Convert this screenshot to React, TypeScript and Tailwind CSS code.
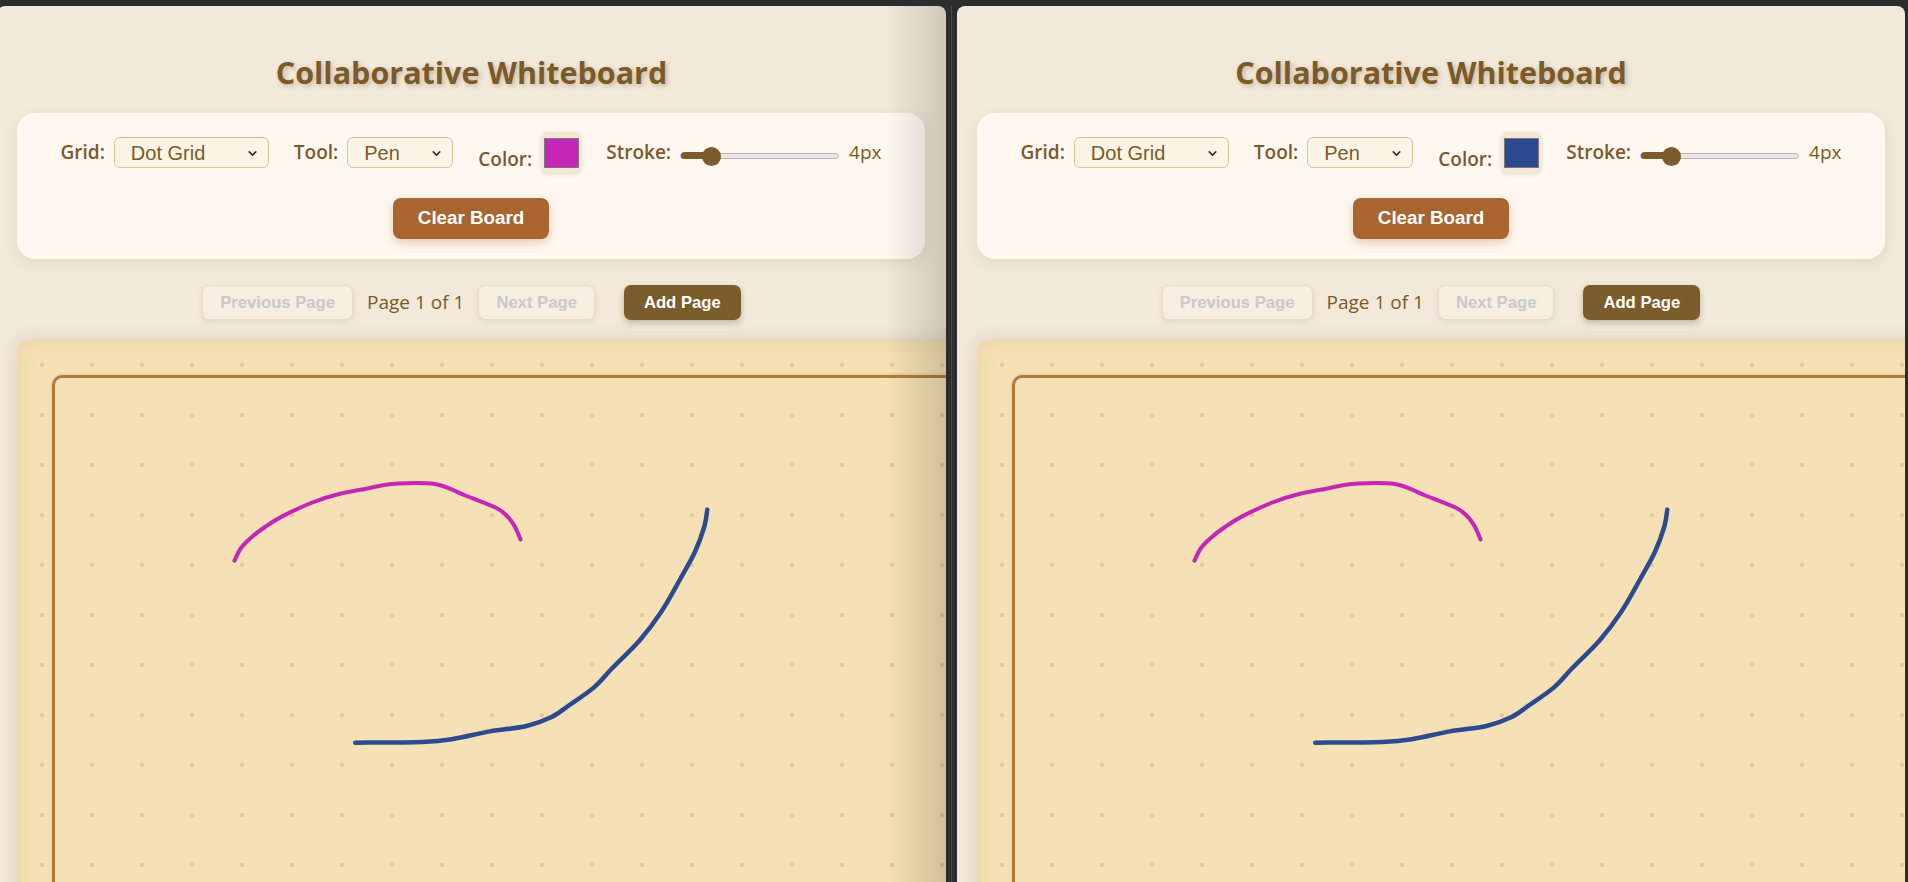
import React from 'react';
import { ChevronDown } from 'lucide-react';

const magenta: [number, number][] = [
  [217.5, 220.6], [224, 208], [234, 197.7], [248, 187], [264.7, 176.6], [295.3, 162.5], [322, 154],
  [350.4, 148.5], [375, 143.9], [417.8, 143.9], [448.4, 155.5], [479, 167.8], [490, 176],
  [496, 183.7], [500, 191], [503.5, 199.5],
];

const blue: [number, number][] = [
  [690.3, 169.6], [687.2, 187], [678, 211.8], [662.7, 240], [644.3, 271.7], [623, 299.9],
  [595.4, 328], [577, 347.4], [552.5, 365], [534, 377.3], [509.6, 386], [472.9, 391.4],
  [436, 399], [405.5, 401.9], [338.2, 402.7],
];

// smooth the captured points with a catmull-rom curve
const toPath = (p: [number, number][]) => {
  let d = `M${p[0][0]},${p[0][1]}`;
  for (let i = 0; i < p.length - 1; i++) {
    const p0 = p[i - 1] || p[i];
    const p1 = p[i];
    const p2 = p[i + 1];
    const p3 = p[i + 2] || p2;
    const c1x = p1[0] + (p2[0] - p0[0]) / 6;
    const c1y = p1[1] + (p2[1] - p0[1]) / 6;
    const c2x = p2[0] - (p3[0] - p1[0]) / 6;
    const c2y = p2[1] - (p3[1] - p1[1]) / 6;
    d += ` C${c1x},${c1y} ${c2x},${c2y} ${p2[0]},${p2[1]}`;
  }
  return d;
};

function Select({ value, width }: { value: string; width: string }) {
  return (
    <div
      className={`relative flex items-center h-[31px] ${width} rounded-[6px] border border-[#dcc291] bg-[#fcf5e7] pl-[16px] text-[20px] text-[#7a5a2b] font-['Liberation_Sans',Arial,sans-serif]`}
    >
      {value}
      <ChevronDown className="absolute right-[9px] top-[9px] h-[13px] w-[13px] text-[#333]" strokeWidth={3} />
    </div>
  );
}

function Whiteboard({ swatch, dim }: { swatch: string; dim?: boolean }) {
  return (
    <div className="relative h-[876px] overflow-hidden rounded-t-[8px] bg-[#f2e9da]">
      <div className="flex flex-col items-center px-[20px] pt-[46px]">
        <h1 className="h-[40px] leading-[40px] text-[30.5px] font-bold text-[#7a5a2b] [text-shadow:2px_2px_5px_rgba(122,90,43,0.35)]">
          Collaborative Whiteboard
        </h1>

        {/* Toolbar */}
        <div className="mt-[21px] w-[908px] self-start rounded-[18px] bg-[#fef8f0] px-[20px] pt-[19px] pb-[20px] shadow-[0_4px_14px_rgba(122,90,43,0.12)]">
          <div className="flex h-[41px] items-center justify-center gap-x-[25px] text-[19px] text-[#7a5a2b]">
            <div className="flex items-center gap-[9px]">
              <span className="font-semibold">Grid:</span>
              <Select value="Dot Grid" width="w-[155px]" />
            </div>
            <div className="flex items-center gap-[9px]">
              <span className="font-semibold">Tool:</span>
              <Select value="Pen" width="w-[106px]" />
            </div>
            <div className="flex h-[41px] items-end gap-[9px]">
              <span className="font-semibold leading-[28px]">Color:</span>
              <div className="flex h-[41px] w-[40px] items-center justify-center rounded-[6px] bg-[#f3e7d4] shadow-[0_1px_4px_rgba(122,90,43,0.2)]">
                <div className={`h-[30px] w-[35px] border border-[#7a7a7a] ${swatch}`} />
              </div>
            </div>
            <div className="flex items-center gap-[9px]">
              <span className="font-semibold">Stroke:</span>
              <div className="relative mt-[6px] flex h-[6px] w-[159px] items-center rounded-full border border-[#b9b9b9] bg-[#e8e8e8]">
                <div className="h-[7px] w-[31px] rounded-full bg-[#7b5c2c]" />
                <div className="absolute left-[21px] top-[-7px] h-[19px] w-[19px] rounded-full bg-[#7b5c2c]" />
              </div>
              <span className="ml-[1px]">4px</span>
            </div>
          </div>
          <div className="mt-[25px] flex justify-center">
            <button className="h-[41px] rounded-[8px] bg-[#a9652f] px-[25px] text-[18.75px] font-bold text-white font-['Liberation_Sans',Arial,sans-serif] shadow-[0_4px_10px_rgba(169,101,47,0.3)]">
              Clear Board
            </button>
          </div>
        </div>

        {/* Pagination */}
        <div className="mt-[26px] flex items-center font-['Liberation_Sans',Arial,sans-serif]">
          <button className="h-[35px] rounded-[7px] border border-[#edd9c2] bg-[#f7eee2] px-[17px] text-[16.67px] font-bold text-[#c9c9c9] shadow-[0_2px_5px_rgba(169,101,47,0.15)]">
            Previous Page
          </button>
          <span className="mx-[14px] text-[19px] text-[#7a5a2b] font-['Open_Sans',sans-serif]">Page 1 of 1</span>
          <button className="h-[35px] rounded-[7px] border border-[#edd9c2] bg-[#f7eee2] px-[17px] text-[16.67px] font-bold text-[#c9c9c9] shadow-[0_2px_5px_rgba(169,101,47,0.15)]">
            Next Page
          </button>
          <button className="ml-[29px] h-[35px] rounded-[7px] bg-[#7b5c2c] px-[20px] text-[16.67px] font-bold text-white shadow-[0_3px_6px_rgba(90,60,20,0.3)]">
            Add Page
          </button>
        </div>

        {/* Canvas */}
        <div className="relative mt-[20px] h-[620px] w-[1100px] shrink-0 self-start rounded-[12px] bg-[#f5e1b5] bg-[radial-gradient(circle,#dfcb9b_2px,transparent_2.6px)] bg-[size:50px_50px] pl-[35px] pt-[35px] shadow-[0_0_18px_rgba(122,90,43,0.18),inset_0_0_22px_rgba(150,110,50,0.12)]">
          <div className="h-[640px] w-[1100px] rounded-[10px] border-[3px] border-[#b07c3a] shadow-[0_-1px_3px_rgba(122,90,43,0.15)]" />
          <svg className="absolute left-0 top-0" width="1100" height="620">
            <path d={toPath(magenta)} fill="none" stroke="#c427b7" strokeWidth={4} strokeLinecap="round" strokeLinejoin="round" />
            <path d={toPath(blue)} fill="none" stroke="#2c4a8f" strokeWidth={4.5} strokeLinecap="round" strokeLinejoin="round" />
          </svg>
        </div>
      </div>
      {dim && (
        <div className="pointer-events-none absolute right-0 top-0 h-full w-[60px] bg-gradient-to-r from-transparent to-black/15" />
      )}
    </div>
  );
}

export default function App() {
  return (
    <div className="flex h-[882px] w-[1908px] overflow-hidden bg-[#2d2d2d] pt-[6px] font-['Open_Sans',sans-serif]">
      <div className="ml-[-3px] w-[949px] shrink-0">
        <Whiteboard swatch="bg-[#c427b7]" dim />
      </div>
      <div className="w-[11px] shrink-0 flex justify-center">
        <div className="w-px bg-[#4a4a4a]" />
      </div>
      <div className="w-[948px] shrink-0">
        <Whiteboard swatch="bg-[#2c4a8f]" />
      </div>
    </div>
  );
}
